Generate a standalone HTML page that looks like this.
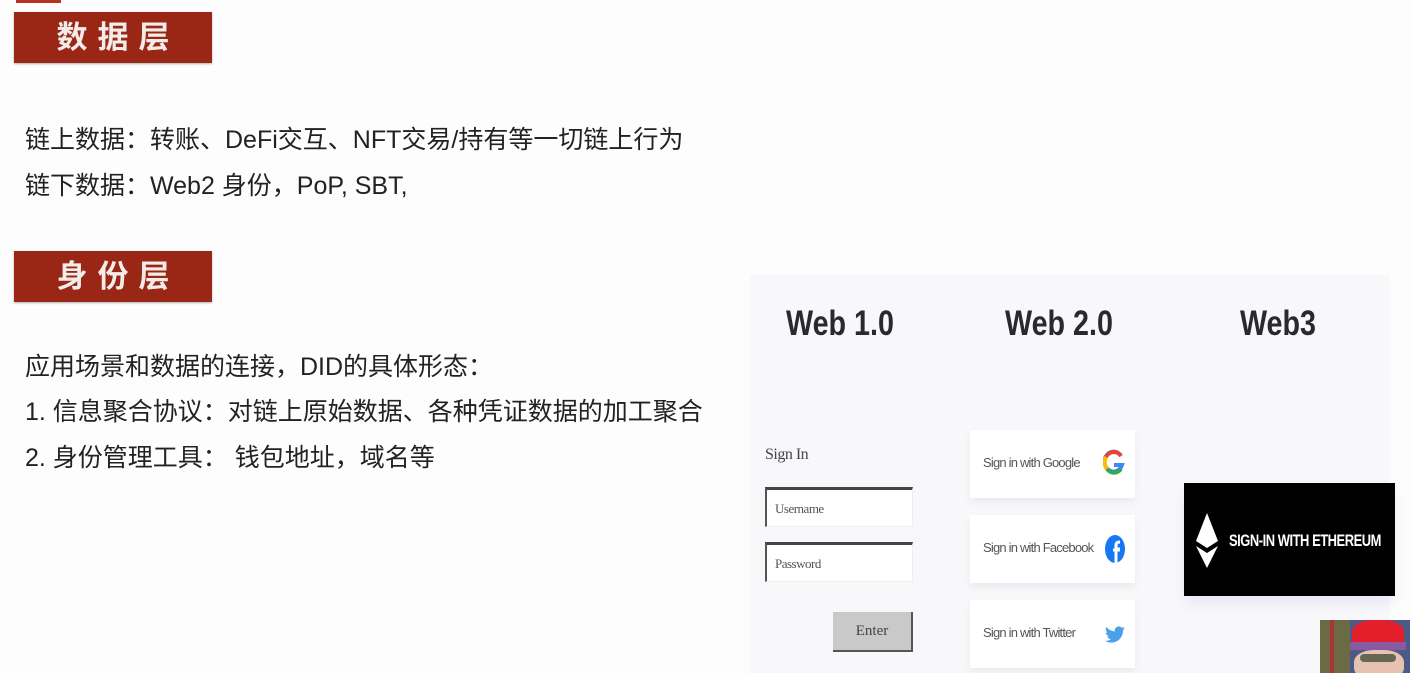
<!DOCTYPE html>
<html><head><meta charset="utf-8"><style>
*{margin:0;padding:0;box-sizing:border-box}
body{width:1410px;height:673px;overflow:hidden;background:#fdfdfd;position:relative;font-family:"Liberation Sans","Noto Sans CJK SC",sans-serif;color:#222}
.a{position:absolute}
.hd{background:#9a2616;color:#f4ece8;font-weight:bold;font-size:31px;letter-spacing:10px;text-indent:10px;text-align:center;line-height:51px;width:198px;height:51px;left:14px;box-shadow:0 1px 2px rgba(0,0,0,.3)}
.t{font-size:25px;white-space:nowrap;left:25px;line-height:30px}
.wt{font-size:35px;font-weight:bold;color:#2a2a2e;transform:scaleX(.82);transform-origin:center;width:200px;text-align:center;top:304px}
.box{background:#fff;border-top:3px solid #444;border-left:2px solid #555;border-right:1px solid #eee;border-bottom:1px solid #eee;font-family:"Liberation Serif",serif;font-size:13px;color:#555;padding-left:8px;line-height:38px;letter-spacing:-.5px}
.card{background:#fff;left:970px;width:165px;height:68px;box-shadow:0 4px 8px rgba(0,0,0,.06);font-size:13px;color:#555;letter-spacing:-.8px}
.card span{position:absolute;left:13px;top:25px}
</style></head><body>
<div class="a" style="left:16px;top:0;width:45px;height:3px;background:#b8321f"></div>
<div class="a hd" style="top:12px">数据层</div>
<div class="a t" style="top:125px">链上数据：转账、DeFi交互、NFT交易/持有等一切链上行为</div>
<div class="a t" style="top:171px">链下数据：Web2 身份，PoP, SBT,</div>
<div class="a hd" style="top:251px">身份层</div>
<div class="a t" style="top:352px">应用场景和数据的连接，DID的具体形态：</div>
<div class="a t" style="top:397px">1. 信息聚合协议：对链上原始数据、各种凭证数据的加工聚合</div>
<div class="a t" style="top:443px">2. 身份管理工具： 钱包地址，域名等</div>

<div class="a" style="left:750px;top:275px;width:640px;height:398px;background:#f8f8fb"></div>
<div class="a wt" style="left:740px">Web 1.0</div>
<div class="a wt" style="left:959px">Web 2.0</div>
<div class="a wt" style="left:1178px">Web3</div>

<div class="a" style="left:765px;top:446px;font-family:'Liberation Serif',serif;font-size:16px;color:#444;letter-spacing:-.5px">Sign In</div>
<div class="a box" style="left:765px;top:487px;width:148px;height:40px">Username</div>
<div class="a box" style="left:765px;top:542px;width:148px;height:40px">Password</div>
<div class="a" style="left:833px;top:612px;width:80px;height:40px;background:#c9c9c9;border-right:2px solid #555;border-bottom:2px solid #555;font-family:'Liberation Serif',serif;font-size:15px;color:#444;text-align:center;line-height:38px">Enter</div>

<div class="a card" style="top:430px"><span>Sign in with Google</span>
<svg class="a" style="left:133px;top:18px" width="22" height="30" viewBox="0 0 22 30"><path d="M18 8A9 10 0 1 0 19 17H11" fill="none" stroke="#4285f4" stroke-width="4"/><path d="M18 8A9 10 0 0 0 3 9" fill="none" stroke="#ea4335" stroke-width="4"/><path d="M3 9A9 10 0 0 0 4 21" fill="none" stroke="#fbbc05" stroke-width="4"/><path d="M4 21A9 10 0 0 0 18 21" fill="none" stroke="#34a853" stroke-width="4"/></svg></div>
<div class="a card" style="top:515px"><span>Sign in with Facebook</span>
<svg class="a" style="left:134px;top:19px" width="22" height="30" viewBox="0 0 22 30"><ellipse cx="11" cy="15" rx="10" ry="14" fill="#1877f2"/><path d="M12 29V15h4M12 29V11q0-3 4-3M9 16h7" stroke="#fff" stroke-width="3" fill="none"/></svg></div>
<div class="a card" style="top:600px"><span>Sign in with Twitter</span>
<svg class="a" style="left:134px;top:22px" width="22" height="26" viewBox="0 0 24 24"><path d="M23 5a9 9 0 0 1-2.6.7A4.5 4.5 0 0 0 22.4 3a9 9 0 0 1-2.9 1.1A4.5 4.5 0 0 0 11.8 8 12.8 12.8 0 0 1 2.5 3.3 4.5 4.5 0 0 0 3.9 9.3 4.5 4.5 0 0 1 1.9 8.8a4.5 4.5 0 0 0 3.6 4.4 4.5 4.5 0 0 1-2 .1 4.5 4.5 0 0 0 4.2 3.1A9 9 0 0 1 1 18.3 12.7 12.7 0 0 0 7.9 20.3c8.3 0 12.8-6.9 12.8-12.8v-.6A9 9 0 0 0 23 5z" fill="#4aa1e8"/></svg></div>

<div class="a" style="left:1184px;top:483px;width:211px;height:113px;background:#000;box-shadow:0 8px 12px rgba(120,130,200,.12)"></div>
<svg class="a" style="left:1195px;top:513px" width="24" height="56" viewBox="0 0 24 56"><path d="M12 0L1 28l11 7 11-7z" fill="#fff"/><path d="M1 33l11 22 11-22-11 7z" fill="#fff"/></svg>
<div class="a" style="left:1229px;top:531px;color:#fff;font-weight:bold;font-size:17px;letter-spacing:-.6px;transform:scaleX(.76);transform-origin:left;white-space:nowrap">SIGN-IN WITH ETHEREUM</div>

<div class="a" style="left:1320px;top:620px;width:90px;height:53px;background:#6b6a45;overflow:hidden">
<div class="a" style="left:10px;top:0;width:4px;height:53px;background:#a33"></div>
<div class="a" style="left:30px;top:0;width:60px;height:53px;background:#4b5a86"></div>
<div class="a" style="left:32px;top:0;width:52px;height:30px;background:#e21f2a;border-radius:40% 40% 0 0"></div>
<div class="a" style="left:30px;top:22px;width:56px;height:8px;background:#8a5aa0"></div>
<div class="a" style="left:34px;top:30px;width:50px;height:30px;background:#e8c2b0;border-radius:40%"></div>
<div class="a" style="left:40px;top:34px;width:36px;height:8px;background:#665;border-radius:4px"></div>
</div>
</body></html>
